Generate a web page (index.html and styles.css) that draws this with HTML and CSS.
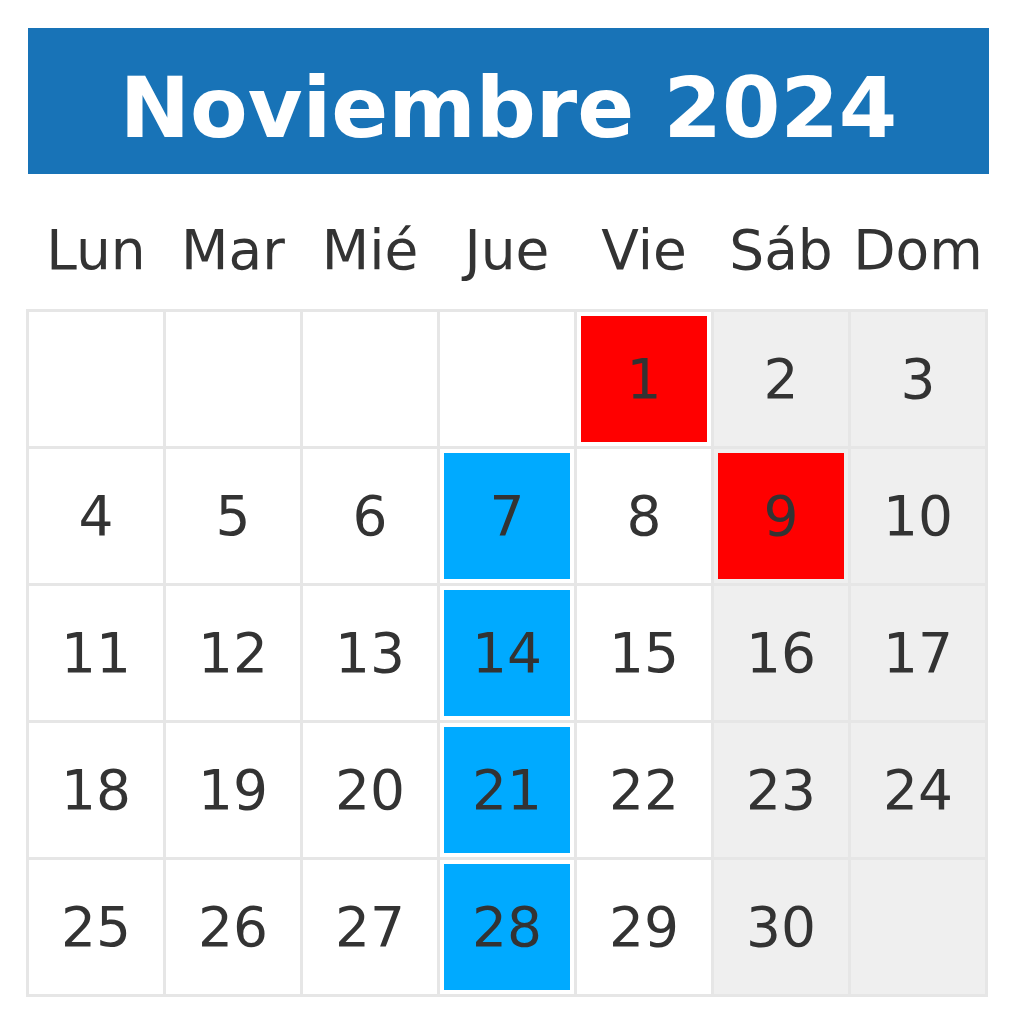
FILE: index.html
```html
<!DOCTYPE html>
<html lang="es">
<head>
<meta charset="utf-8">
<title>Noviembre 2024</title>
<link rel="stylesheet" href="styles.css">
</head>
<body>
<div class="calendar">
  <div class="title">Noviembre 2024</div>
  <div class="weekdays">
    <div>Lun</div><div>Mar</div><div>Mié</div><div>Jue</div><div>Vie</div><div>Sáb</div><div>Dom</div>
  </div>
  <div class="grid">
    <div class="cell"></div>
    <div class="cell"></div>
    <div class="cell"></div>
    <div class="cell"></div>
    <div class="cell"><span class="mark red">1</span></div>
    <div class="cell we"><span class="num">2</span></div>
    <div class="cell we"><span class="num">3</span></div>

    <div class="cell"><span class="num">4</span></div>
    <div class="cell"><span class="num">5</span></div>
    <div class="cell"><span class="num">6</span></div>
    <div class="cell"><span class="mark blue">7</span></div>
    <div class="cell"><span class="num">8</span></div>
    <div class="cell we"><span class="mark red">9</span></div>
    <div class="cell we"><span class="num">10</span></div>

    <div class="cell"><span class="num">11</span></div>
    <div class="cell"><span class="num">12</span></div>
    <div class="cell"><span class="num">13</span></div>
    <div class="cell"><span class="mark blue">14</span></div>
    <div class="cell"><span class="num">15</span></div>
    <div class="cell we"><span class="num">16</span></div>
    <div class="cell we"><span class="num">17</span></div>

    <div class="cell"><span class="num">18</span></div>
    <div class="cell"><span class="num">19</span></div>
    <div class="cell"><span class="num">20</span></div>
    <div class="cell"><span class="mark blue">21</span></div>
    <div class="cell"><span class="num">22</span></div>
    <div class="cell we"><span class="num">23</span></div>
    <div class="cell we"><span class="num">24</span></div>

    <div class="cell"><span class="num">25</span></div>
    <div class="cell"><span class="num">26</span></div>
    <div class="cell"><span class="num">27</span></div>
    <div class="cell"><span class="mark blue">28</span></div>
    <div class="cell"><span class="num">29</span></div>
    <div class="cell we"><span class="num">30</span></div>
    <div class="cell we"></div>
  </div>
</div>
</body>
</html>
```
FILE: styles.css
```css
html, body {
  margin: 0;
  padding: 0;
  background: #ffffff;
}

body {
  font-family: "DejaVu Sans", "Liberation Sans", sans-serif;
  color: #333333;
}

.calendar {
  width: 962px;
  margin-left: 26px;
  padding-top: 28px;
}

.title {
  margin-left: 2px;
  width: 961px;
  height: 146px;
  background: #1873b7;
  color: #ffffff;
  font-weight: bold;
  font-size: 84px;
  line-height: 1;
  display: flex;
  align-items: center;
  justify-content: center;
  padding-top: 14px;
  box-sizing: border-box;
}

.weekdays {
  height: 135px;
  display: grid;
  grid-template-columns: repeat(7, 134px);
  column-gap: 3px;
  padding: 18px 3px 0;
  align-items: center;
  justify-items: center;
  font-size: 55px;
  line-height: 1;
  box-sizing: border-box;
}

.grid {
  display: grid;
  grid-template-columns: repeat(7, 134px);
  grid-auto-rows: 134px;
  gap: 3px;
  padding: 3px;
  background: #e6e6e6;
  width: max-content;
}

.cell {
  background: #ffffff;
  display: flex;
  align-items: center;
  justify-content: center;
  font-size: 55px;
  line-height: 1;
}

.cell.we {
  background: #efefef;
}

.cell:has(.mark) {
  padding: 4px;
  align-items: stretch;
  justify-content: stretch;
}

.mark {
  flex: 1;
  display: flex;
  align-items: center;
  justify-content: center;
}

.mark.red {
  background: #ff0000;
}

.mark.blue {
  background: #00aaff;
}
```
